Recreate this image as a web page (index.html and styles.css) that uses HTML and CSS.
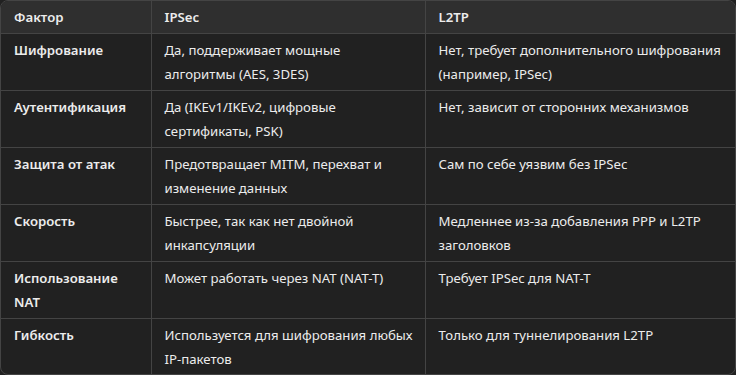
FILE: index.html
```html
<!DOCTYPE html>
<html lang="ru">
<head>
<meta charset="utf-8">
<link rel="stylesheet" href="styles.css">
</head>
<body>
<div class="wrap">
<table class="cmp">
<colgroup><col class="c1"><col class="c2"><col class="c3"></colgroup>
<thead>
<tr><th>Фактор</th><th>IPSec</th><th>L2TP</th></tr>
</thead>
<tbody>
<tr><td class="f">Шифрование</td><td>Да, поддерживает мощные<br>алгоритмы (AES, 3DES)</td><td>Нет, требует дополнительного шифрования<br>(например, IPSec)</td></tr>
<tr><td class="f">Аутентификация</td><td>Да (IKEv1/IKEv2, цифровые<br>сертификаты, PSK)</td><td>Нет, зависит от сторонних механизмов</td></tr>
<tr><td class="f">Защита от атак</td><td>Предотвращает MITM, перехват и<br>изменение данных</td><td>Сам по себе уязвим без IPSec</td></tr>
<tr><td class="f">Скорость</td><td>Быстрее, так как нет двойной<br>инкапсуляции</td><td>Медленнее из-за добавления PPP и L2TP<br>заголовков</td></tr>
<tr><td class="f">Использование<br>NAT</td><td>Может работать через NAT (NAT-T)</td><td>Требует IPSec для NAT-T</td></tr>
<tr><td class="f">Гибкость</td><td>Используется для шифрования любых<br>IP-пакетов</td><td>Только для туннелирования L2TP</td></tr>
</tbody>
</table>
</div>
</body>
</html>
```

FILE: styles.css
```css
html, body {
  margin: 0;
  padding: 0;
  background: #212121;
}
body {
  font-family: "Noto Sans", "Open Sans", sans-serif;
  font-size: 13.2px;
  color: #ececec;
}
.wrap {
  width: 734px;
  border: 1px solid #444444;
  border-radius: 8px;
  overflow: hidden;
  height: 373px;
}
.cmp {
  width: 734px;
  border-collapse: collapse;
  table-layout: fixed;
}
.c1 { width: 150px; }
.c2 { width: 274px; }
.c3 { width: 310px; }
.cmp th, .cmp td {
  padding: 4px 8px 4px 13px;
  line-height: 24px;
  text-align: left;
  vertical-align: top;
  white-space: nowrap;
  border-right: 1px solid #444444;
  border-bottom: 1px solid #444444;
}
.cmp th:last-child, .cmp td:last-child { border-right: none; }
.cmp tbody tr:last-child td { border-bottom: none; }
.cmp th {
  background: #2f2f2f;
  font-weight: 600;
}
.cmp td.f { font-weight: 600; }
```
